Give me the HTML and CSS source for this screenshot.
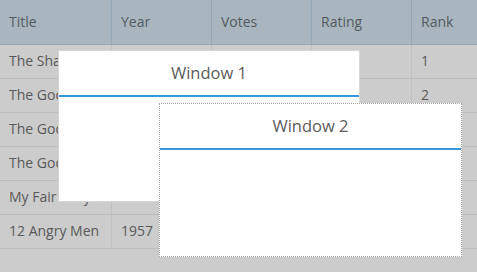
FILE: index.html
```html
<!DOCTYPE html>
<html>
<head>
<meta charset="utf-8">
<link rel="stylesheet" href="styles.css">
</head>
<body>
<div class="grid">
  <div class="row head">
    <div class="cell c1">Title</div>
    <div class="cell">Year</div>
    <div class="cell">Votes</div>
    <div class="cell">Rating</div>
    <div class="cell last">Rank</div>
  </div>
  <div class="row">
    <div class="cell c1">The Shawshank Redemption</div>
    <div class="cell">1994</div>
    <div class="cell">678790</div>
    <div class="cell"></div>
    <div class="cell last">1</div>
  </div>
  <div class="row">
    <div class="cell c1">The Godfather</div>
    <div class="cell">1972</div>
    <div class="cell">511495</div>
    <div class="cell"></div>
    <div class="cell last">2</div>
  </div>
  <div class="row">
    <div class="cell c1">The Godfather: Part II</div>
    <div class="cell">1974</div>
    <div class="cell">319352</div>
    <div class="cell"></div>
    <div class="cell last"></div>
  </div>
  <div class="row">
    <div class="cell c1">The Good, the Bad and the Ugly</div>
    <div class="cell">1966</div>
    <div class="cell">213030</div>
    <div class="cell"></div>
    <div class="cell last"></div>
  </div>
  <div class="row">
    <div class="cell c1">My Fair Lady</div>
    <div class="cell">1964</div>
    <div class="cell">533848</div>
    <div class="cell"></div>
    <div class="cell last"></div>
  </div>
  <div class="row">
    <div class="cell c1">12 Angry Men</div>
    <div class="cell">1957</div>
    <div class="cell">164558</div>
    <div class="cell"></div>
    <div class="cell last"></div>
  </div>
</div>

<div class="window win1">
  <div class="win-head">Window 1</div>
  <div class="win-body"></div>
</div>
<div class="window win2">
  <div class="win-head">Window 2</div>
  <div class="win-body"></div>
</div>
</body>
</html>
```

FILE: styles.css
```css
html, body {
  margin: 0;
  padding: 0;
  background: #cccccc;
  width: 477px;
  height: 272px;
  overflow: hidden;
  font-family: "Open Sans", "DejaVu Sans", sans-serif;
}

.grid {
  display: flex;
  flex-direction: column;
}

.row {
  display: grid;
  grid-template-columns: 112px 100px 100px 100px 65px;
  height: 33px;
  border-bottom: 1px solid #bcbcbc;
  background: #cccccc;
}

.row.head {
  height: 44px;
  background: #a9b6c0;
  border-bottom: 1px solid #93a8b9;
}

.cell {
  box-sizing: border-box;
  padding-left: 9px;
  font-size: 14px;
  color: #595959;
  line-height: 32px;
  white-space: nowrap;
  overflow: hidden;
  border-right: 1px solid #c0c0c0;
}

.row.head .cell {
  line-height: 43px;
  border-right: 1px solid #95a9b9;
  color: #535b61;
}

.cell.last {
  border-right: none;
}

.row.head .cell.last {
  border-right: none;
}

.window {
  position: absolute;
  background: #ffffff;
  box-sizing: border-box;
  display: flex;
  flex-direction: column;
}

.win1 {
  left: 58px;
  top: 50px;
  width: 302px;
  height: 152px;
  border: 1px solid #d6d6d6;
}

.win2 {
  left: 159px;
  top: 103px;
  width: 303px;
  height: 154px;
  border: 1px dotted #a8a8a8;
}

.win-head {
  height: 44px;
  border-bottom: 2px solid #3498db;
  text-align: center;
  line-height: 44px;
  font-size: 16.5px;
  color: #5c5c5c;
}

.win-body {
  flex: 1;
}
```
